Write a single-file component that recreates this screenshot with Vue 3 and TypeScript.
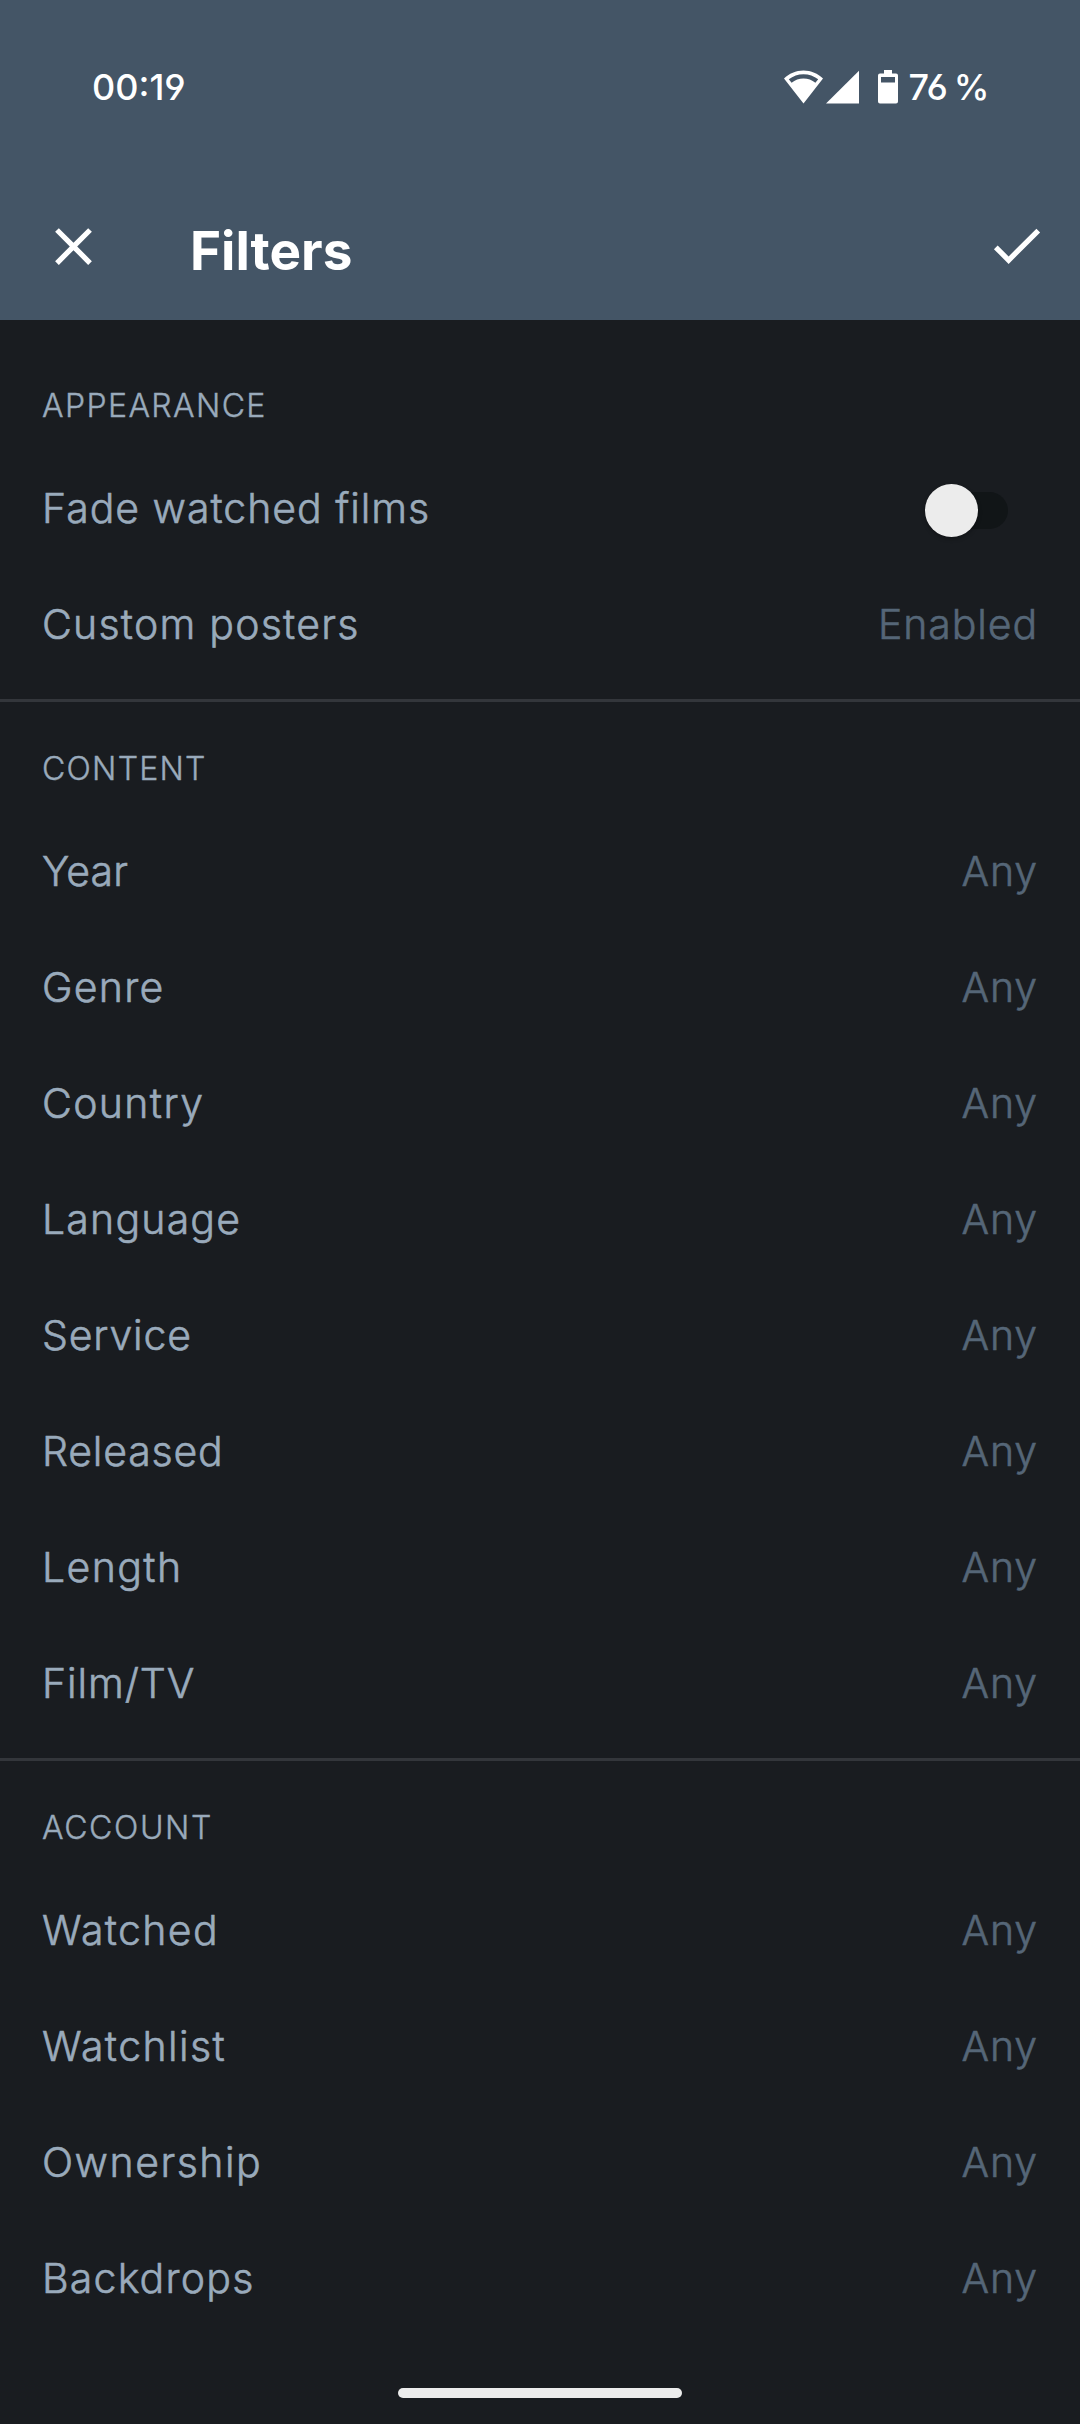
<script setup lang="ts">
import { ref } from 'vue'

interface FilterRow {
  label: string
  tracking: number
  value?: string
  toggle?: boolean
}

interface FilterSection {
  title: string
  tracking: number
  rows: FilterRow[]
}

const any = (label: string, tracking: number): FilterRow => ({ label, tracking, value: 'Any' })

const fadeWatched = ref(false)

// tracking is the label's letter spacing in px
const sections: FilterSection[] = [
  {
    title: 'APPEARANCE',
    tracking: 1.4,
    rows: [
      { label: 'Fade watched films', tracking: 0.97, toggle: true },
      { label: 'Custom posters', tracking: 1.23, value: 'Enabled' },
    ],
  },
  {
    title: 'CONTENT',
    tracking: 1.25,
    rows: [
      any('Year', 0.1),
      any('Genre', 1.25),
      any('Country', 1.35),
      any('Language', 1.2),
      any('Service', 0.8),
      any('Released', 0.8),
      any('Length', 1.4),
      any('Film/TV', 0.9),
    ],
  },
  {
    title: 'ACCOUNT',
    tracking: 1.6,
    rows: [
      any('Watched', 1.35),
      any('Watchlist', 1.4),
      any('Ownership', 1.5),
      any('Backdrops', 1.2),
    ],
  },
]
</script>

<template>
  <div class="screen">
    <header class="header">
      <div class="status">
        <span class="clock">00:19</span>
        <div class="indicators">
          <svg class="wifi" width="39" height="34" viewBox="0 0 39 34">
            <path fill="#fff" fill-rule="evenodd" d="M19.5 33.5 0 8.6C5 3.6 12 .5 19.500 .5S34 3.600 39 8.600ZM4.800 9.300 7.600 12.800C11 10 15 8.500 19.500 8.500S28 10 31.400 12.800L34.200 9.300C30 6 25 4.200 19.500 4.200S9 6 4.800 9.300Z" />
          </svg>
          <svg class="signal" width="33" height="34" viewBox="0 0 33 34">
            <path fill="#fff" d="M33 .8V33.600H0Z" />
          </svg>
          <svg class="battery" width="20" height="34" viewBox="0 0 20 34">
            <path fill="#fff" fill-rule="evenodd" d="M6 0H14V3.500H18Q20 3.500 20 5.500V31.500Q20 33.500 18 33.500H2Q0 33.500 0 31.500V5.500Q0 3.500 2 3.500H6ZM3 7V12.500H17V7Z" />
          </svg>
          <span class="percent">76 %</span>
        </div>
      </div>
      <div class="appbar">
        <svg class="close" width="63" height="63" viewBox="0 0 24 24">
          <path fill="#fff" d="M19 6.410 17.590 5 12 10.590 6.410 5 5 6.410 10.590 12 5 17.590 6.410 19 12 13.410 17.590 19 19 17.590 13.410 12Z" />
        </svg>
        <h1 class="title">Filters</h1>
        <svg class="apply" width="63" height="63" viewBox="0 0 24 24">
          <path fill="#fff" d="M9 16.170 4.830 12 3.410 13.410 9 19 21 7 19.590 5.590Z" />
        </svg>
      </div>
    </header>

    <main class="list">
      <section v-for="section in sections" :key="section.title" class="section">
        <h2 class="heading" :style="{ letterSpacing: section.tracking + 'px' }">{{ section.title }}</h2>
        <div v-for="row in section.rows" :key="row.label" class="row">
          <span class="label" :style="{ letterSpacing: row.tracking + 'px' }">{{ row.label }}</span>
          <button
            v-if="row.toggle"
            class="switch"
            :class="{ on: fadeWatched }"
            :aria-label="row.label"
            @click="fadeWatched = !fadeWatched"
          >
            <span class="thumb"></span>
          </button>
          <span v-else class="value">{{ row.value }}</span>
        </div>
      </section>
    </main>

    <footer class="nav"><span class="handle"></span></footer>
  </div>
</template>

<style>
body {
  margin: 0;
  background: #191c20;
}
</style>

<style scoped>
.screen {
  display: flex;
  flex-direction: column;
  width: 1080px;
  height: 2424px;
  overflow: hidden;
  background: #191c20;
  color: #99aabb;
  font-family: Inter, "Liberation Sans", sans-serif;
}
.header {
  height: 320px;
  background: #445566;
  color: #fff;
}
.status {
  display: flex;
  align-items: center;
  justify-content: space-between;
  box-sizing: border-box;
  height: 173px;
  padding: 1px 92px 0 92px;
  font-size: 36px;
  font-weight: 500;
  font-feature-settings: "ss01", "cv03", "cv04";
}
.indicators {
  display: flex;
  align-items: center;
}
.percent {
  margin-right: -1px;
  letter-spacing: -0.4px;
  word-spacing: -3px;
}
.signal {
  margin-left: 3px;
}
.battery {
  margin: 0 11px 0 19px;
}
.appbar {
  display: flex;
  align-items: center;
  height: 147px;
  padding: 0 32px 0 42px;
}
.title {
  flex: 1;
  margin: 9px 0 0 85px;
  font-size: 53px;
  line-height: 64px;
  font-weight: 700;
}
.apply {
  margin-bottom: 2px;
}
.list {
  flex: 1;
}
.section {
  padding-bottom: 18px;
}
.section:first-child {
  padding-top: 19px;
}
.section + .section {
  border-top: 3px solid #33363b;
}
.heading {
  box-sizing: border-box;
  height: 110px;
  margin: 0;
  padding: 47px 42px 0;
  font-size: 32px;
  line-height: 40px;
  font-weight: 300;
  -webkit-text-stroke: 0.4px currentColor;
}
.row {
  display: flex;
  align-items: center;
  justify-content: space-between;
  box-sizing: border-box;
  height: 116px;
  padding: 2px 42px 0;
  font-size: 41px;
  line-height: 50px;
  font-weight: 300;
  -webkit-text-stroke: 0.6px currentColor;
}
.value {
  color: #556677;
  letter-spacing: 0.9px;
}
.switch {
  display: flex;
  align-items: center;
  width: 73px;
  height: 37px;
  margin: 5px 30px 0 0;
  padding: 0;
  border: 0;
  border-radius: 19px;
  background: #111517;
}
.thumb {
  flex: none;
  width: 53px;
  height: 53px;
  margin-left: -10px;
  border-radius: 50%;
  background: #ececec;
  box-shadow: 0 2px 4px rgba(0, 0, 0, 0.3);
}
.switch.on .thumb {
  margin-left: 30px;
}
.nav {
  display: flex;
  justify-content: center;
  height: 36px;
}
.handle {
  width: 284px;
  height: 10px;
  border-radius: 5px;
  background: #ececec;
}
</style>
